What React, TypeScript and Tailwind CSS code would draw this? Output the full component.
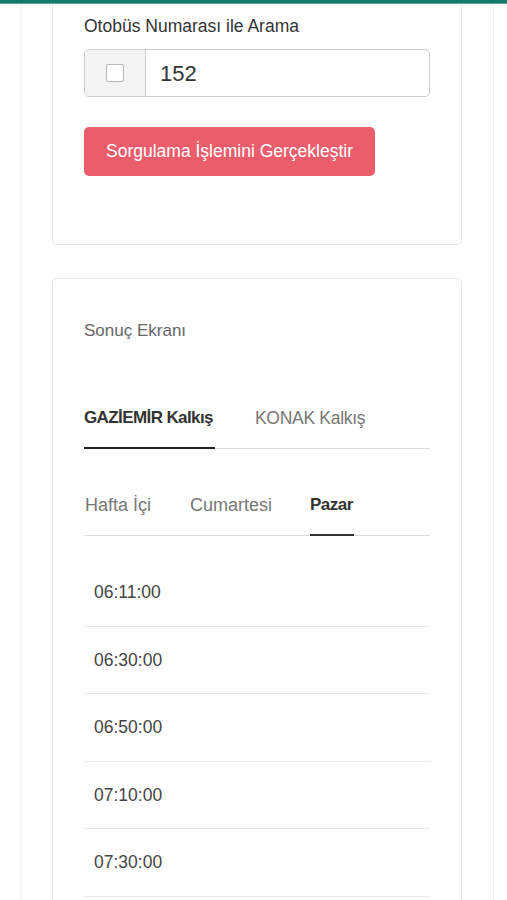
import React from "react";

const times = ["06:11:00", "06:30:00", "06:50:00", "07:10:00", "07:30:00"];

export default function App() {
  return (
    <div className="h-[900px] bg-white overflow-hidden" style={{ fontFamily: '"Liberation Sans", Arial, sans-serif' }}>
      <div className="h-[4px] bg-[#10796a] border-b border-[#5fa89c]" />
      <div className="ml-[20px] mr-[13px] border-x border-[#f0f0f0] px-[31px] min-h-[896px]">
        {/* card 1 */}
        <div className="border-x border-b border-[#e6e6e6] rounded-b-[5px] px-[31px] pt-[10px] pb-[68px]">
          <div className="text-[17.5px] leading-[24px] text-[#333]">Otobüs Numarası ile Arama</div>
          <div className="mt-[11px] flex h-[48px] w-[346px] border border-[#cfcfcf] rounded-[5px] overflow-hidden">
            <div className="w-[61px] flex items-center justify-center bg-[#f3f3f3] border-r border-[#cfcfcf]">
              <div className="w-[18px] h-[18px] bg-white border border-[#b8b8b8] rounded-[2px]" />
            </div>
            <div className="flex-1 flex items-center pl-[14px] text-[22px] text-[#333]">152</div>
          </div>
          <button className="mt-[30px] h-[49px] w-[291px] rounded-[5px] bg-[#ec5d6c] text-white text-[17.5px] flex items-center justify-center">
            Sorgulama İşlemini Gerçekleştir
          </button>
        </div>

        {/* card 2 */}
        <div className="mt-[33px] border border-[#e6e6e6] rounded-[5px] px-[31px] pt-[40px]">
          <div className="text-[17px] leading-[24px] text-[#666]">Sonuç Ekranı</div>

          <div className="mt-[63px] flex border-b border-[#dedede]">
            <div className="w-[131px] pb-[17px] text-[17px] leading-[24px] font-bold text-[#333] border-b-2 border-[#222] -mb-px tracking-[-0.6px] whitespace-nowrap">GAZİEMİR Kalkış</div>
            <div className="ml-[40px] pb-[17px] text-[17.5px] leading-[24px] text-[#777] tracking-[-0.3px]">KONAK Kalkış</div>
          </div>

          <div className="mt-[44px] flex border-b border-[#dedede]">
            <div className="pb-[17px] text-[18px] leading-[24px] text-[#777] pl-[1px] w-[106px]">Hafta İçi</div>
            <div className="pb-[17px] text-[18px] leading-[24px] text-[#777] w-[120px]">Cumartesi</div>
            <div className="w-[44px] pb-[17px] text-[17px] leading-[24px] font-bold text-[#333] border-b-2 border-[#333] -mb-px tracking-[-0.5px] whitespace-nowrap">Pazar</div>
          </div>

          <div className="mt-[23px]">
            {times.map((t) => (
              <div key={t} className="h-[67.5px] flex items-center pl-[10px] border-b border-[#e8e8e8] text-[17.5px] text-[#444]">
                {t}
              </div>
            ))}
            <div className="h-[40px]" />
          </div>
        </div>
      </div>
    </div>
  );
}
